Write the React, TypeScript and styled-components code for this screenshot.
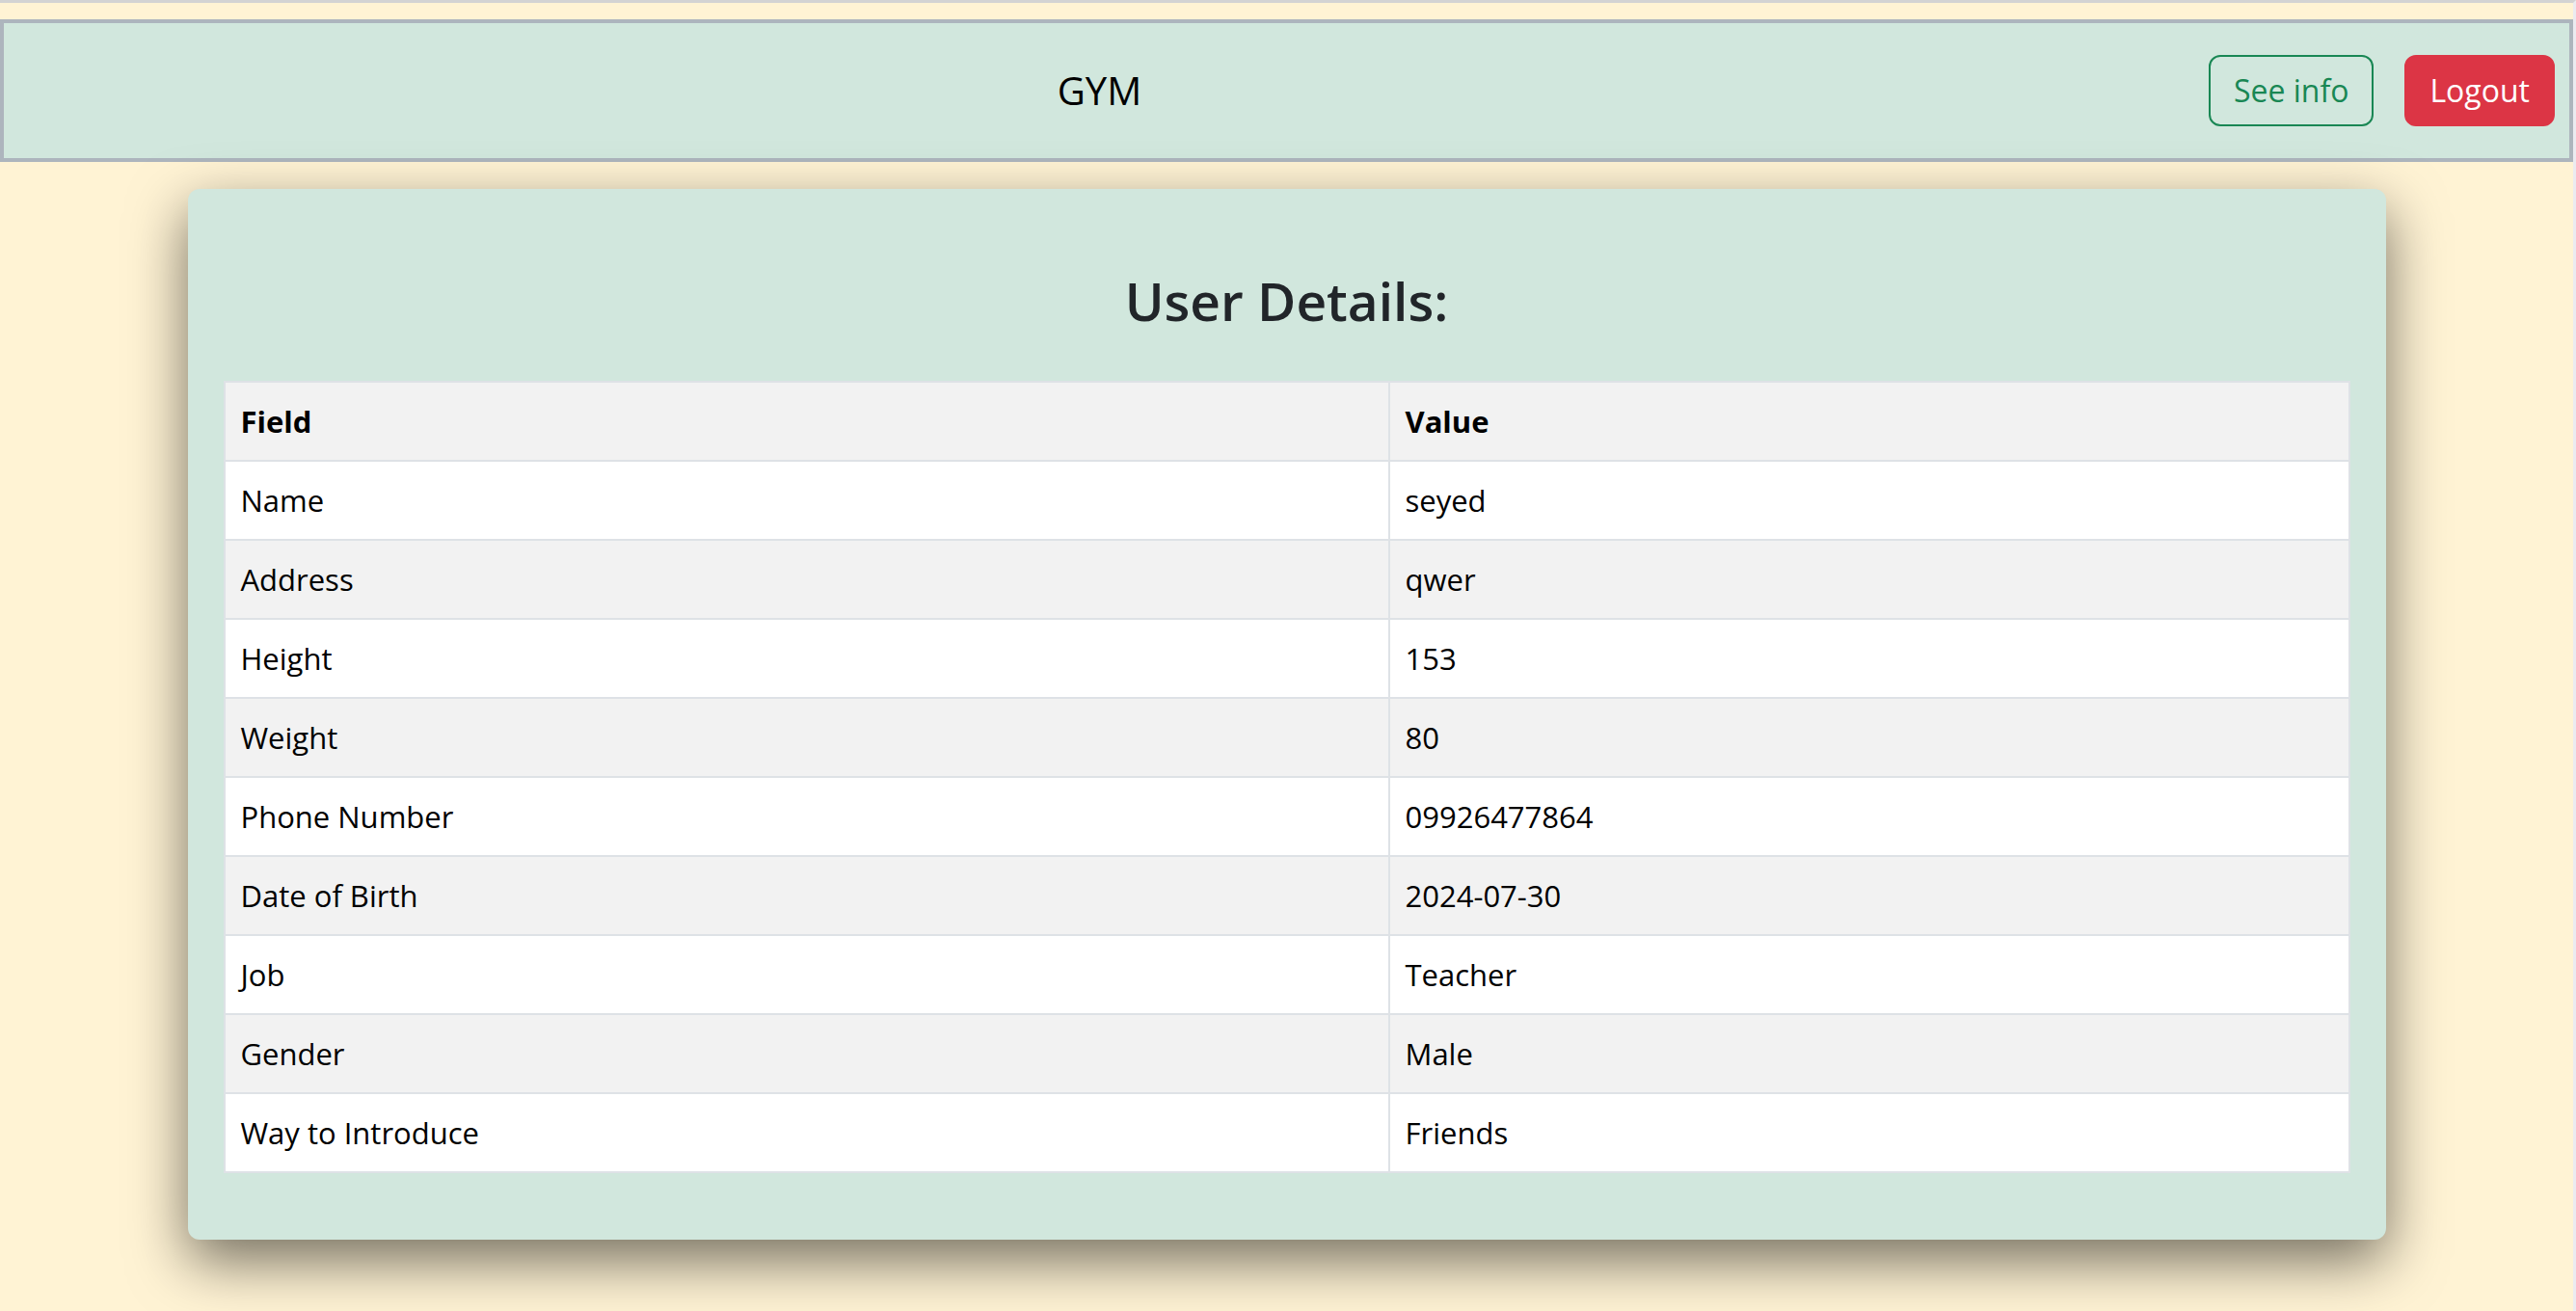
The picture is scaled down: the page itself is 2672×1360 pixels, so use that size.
import React from "react";
import styled, { createGlobalStyle } from "styled-components";

const GlobalStyle = createGlobalStyle`
  html, body {
    margin: 0;
    padding: 0;
    background: #fff3d4;
  }
  * { box-sizing: border-box; }
  body {
    font-family: "Open Sans", "Noto Sans", "Liberation Sans", sans-serif;
  }
`;

const Frame = styled.div`
  min-height: 100vh;
  background: #fff3d4;
  border-top: 3px solid #d3d3d3;
  border-right: 3px solid #ebebf0;
  padding-top: 17px;
  overflow: hidden;
`;

const NavBar = styled.nav`
  display: flex;
  align-items: center;
  height: 148px;
  background: #d1e7dd;
  border: 4px solid #adb5bd;
  padding: 0 15px 0 0;
`;

const BrandArea = styled.div`
  flex: 1;
  display: flex;
  justify-content: center;
  padding-right: 14px;
`;

const Brand = styled.span`
  font-size: 40px;
  color: #000;
  line-height: 1.5;
`;

const Actions = styled.div`
  display: flex;
  align-items: center;
  gap: 32px;
`;

const Button = styled.button<{ $variant: "outline" | "danger" }>`
  font-family: inherit;
  font-size: 32px;
  line-height: 46px;
  padding: 12px 24px;
  border-radius: 12px;
  border: 2px solid ${(p) => (p.$variant === "danger" ? "#dc3545" : "#198754")};
  background: ${(p) => (p.$variant === "danger" ? "#dc3545" : "transparent")};
  color: ${(p) => (p.$variant === "danger" ? "#fff" : "#198754")};
  cursor: pointer;
`;

const Card = styled.section`
  width: 2280px;
  margin: 28px auto 0;
  background: #d1e7dd;
  border-radius: 12px;
  padding: 38px 37px 38px;
  box-shadow: 0 22px 60px rgba(0, 0, 0, 0.55);
`;

const Title = styled.h3`
  margin: 45px 0 50px;
  text-align: center;
  font-size: 55px;
  font-weight: 600;
  line-height: 1.2;
  color: #212529;
`;

const Table = styled.table`
  width: 100%;
  border-collapse: collapse;
  margin-bottom: 31px;
  border: 2px solid #dee2e6;
`;

const Row = styled.tr<{ $shaded: boolean }>`
  background: ${(p) => (p.$shaded ? "#f2f2f2" : "#ffffff")};
`;

const HeadCell = styled.th<{ $first?: boolean }>`
  text-align: left;
  font-size: 31px;
  font-weight: 700;
  line-height: 48px;
  padding: 16px;
  color: #000;
  border: 2px solid #dee2e6;
  width: ${(p) => (p.$first ? "1208px" : "auto")};
`;

const Cell = styled.td`
  font-size: 31px;
  line-height: 48px;
  padding: 16px;
  color: #000;
  border: 2px solid #dee2e6;
`;

const details: [string, string][] = [
  ["Name", "seyed"],
  ["Address", "qwer"],
  ["Height", "153"],
  ["Weight", "80"],
  ["Phone Number", "09926477864"],
  ["Date of Birth", "2024-07-30"],
  ["Job", "Teacher"],
  ["Gender", "Male"],
  ["Way to Introduce", "Friends"],
];

export default function App() {
  return (
    <>
      <GlobalStyle />
      <Frame>
        <NavBar>
          <BrandArea>
            <Brand>GYM</Brand>
          </BrandArea>
          <Actions>
            <Button $variant="outline">See info</Button>
            <Button $variant="danger">Logout</Button>
          </Actions>
        </NavBar>
        <Card>
          <Title>User Details:</Title>
          <Table>
            <thead>
              <Row $shaded>
                <HeadCell $first>Field</HeadCell>
                <HeadCell>Value</HeadCell>
              </Row>
            </thead>
            <tbody>
              {details.map(([k, v], i) => (
                <Row key={k} $shaded={i % 2 === 1}>
                  <Cell>{k}</Cell>
                  <Cell>{v}</Cell>
                </Row>
              ))}
            </tbody>
          </Table>
        </Card>
      </Frame>
    </>
  );
}
